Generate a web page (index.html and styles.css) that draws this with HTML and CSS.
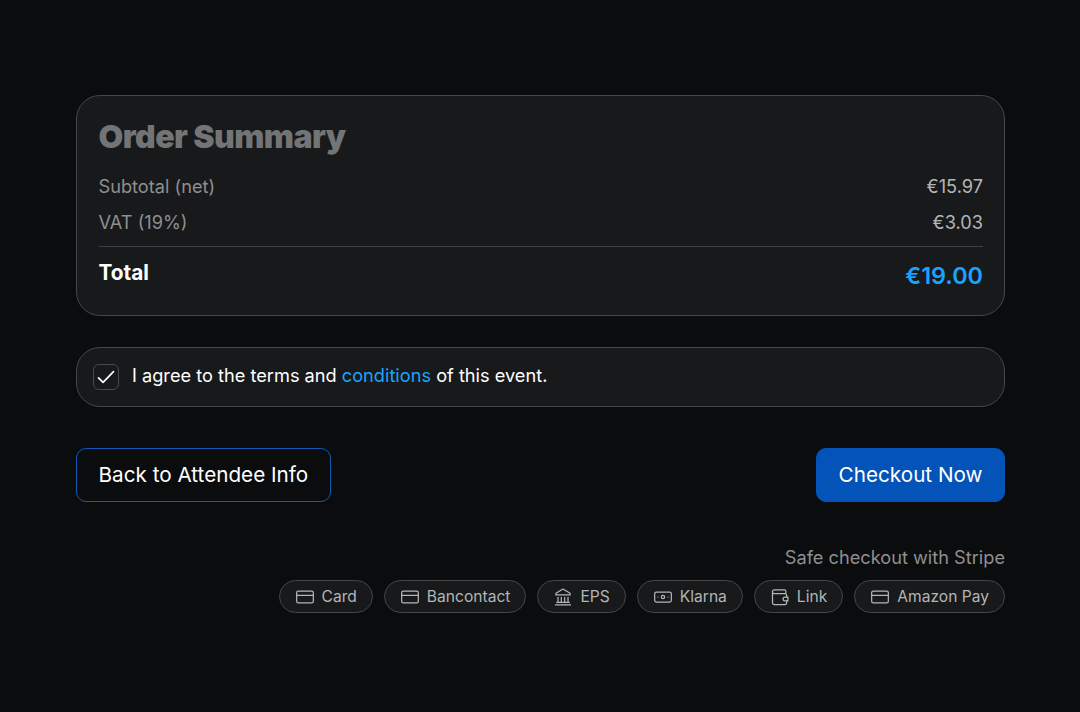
FILE: index.html
```html
<!DOCTYPE html>
<html lang="en">
<head>
    <meta charset="UTF-8">
    <meta name="viewport" content="width=device-width, initial-scale=1.0">
    <title>Order Summary</title>
    <link rel="stylesheet" href="styles.css">
</head>
<body>

<main class="checkout">
    <!-- Summary card -->
    <section class="summary">
        <h2 class="summary-title">Order Summary</h2>
        <div class="summary-row">
            <span class="summary-label">Subtotal (net)</span>
            <span class="summary-value">€15.97</span>
        </div>
        <div class="summary-row">
            <span class="summary-label">VAT (19%)</span>
            <span class="summary-value">€3.03</span>
        </div>
        <div class="summary-total">
            <span class="total-label">Total</span>
            <span class="total-value">€19.00</span>
        </div>
    </section>

    <!-- Terms -->
    <label class="terms">
        <span class="checkbox">
            <svg width="20" height="20" viewBox="0 0 24 24" fill="none" stroke="#fff" stroke-width="2" stroke-linecap="round" stroke-linejoin="round"><path d="M3 13l5.500 5.500L21 5.500"/></svg>
        </span>
        <span class="terms-text">I agree to the terms and <a class="terms-link" href="#">conditions</a> of this event.</span>
    </label>

    <div class="actions">
        <button class="btn btn-outline" type="button">Back to Attendee Info</button>
        <button class="btn btn-primary" type="button">Checkout Now</button>
    </div>

    <div class="payment">
        <p class="payment-note">Safe checkout with Stripe</p>
        <div class="payment-methods">
            <span class="chip">
                <svg class="chip-icon" viewBox="0 0 24 24"><rect x="2" y="5" width="20" height="14" rx="2"/><path d="M2 10h20"/></svg>
                Card
            </span>
            <span class="chip">
                <svg class="chip-icon" viewBox="0 0 24 24"><rect x="2" y="5" width="20" height="14" rx="2"/><path d="M2 10h20"/></svg>
                Bancontact
            </span>
            <span class="chip">
                <svg class="chip-icon" viewBox="0 0 24 24"><path d="M3 21.500h18M12 2.500l8.500 5v2h-17v-2zM6 12.500V18M10 12.500V18M14 12.500V18M18 12.500V18M4.500 18.500h15"/></svg>
                EPS
            </span>
            <span class="chip">
                <svg class="chip-icon" viewBox="0 0 24 24"><rect x="2" y="6" width="20" height="12" rx="2"/><circle cx="12" cy="12" r="2"/><path d="M6 12h.01M18 12h.01"/></svg>
                Klarna
            </span>
            <span class="chip">
                <svg class="chip-icon" viewBox="0 0 24 24"><path d="M19 7V5a1.500 1.500 0 0 0-1.500-1.500H5A2 2 0 0 0 3 5.500V19a2 2 0 0 0 2 2h13a2 2 0 0 0 2-2v-2.500M3 6a2 2 0 0 0 2 2h13a2 2 0 0 1 2 2v2"/><path d="M21.500 12H18a2 2 0 0 0 0 4.500h3.500z"/></svg>
                Link
            </span>
            <span class="chip">
                <svg class="chip-icon" viewBox="0 0 24 24"><rect x="2" y="5" width="20" height="14" rx="2"/><path d="M2 10h20"/></svg>
                Amazon Pay
            </span>
        </div>
    </div>
</main>

</body>
</html>
```

FILE: styles.css
```css
* {
    box-sizing: border-box;
}
body {
    margin: 0;
    min-height: 712px;
    background-color: #0b0c0e;
    color: #fff;
    font-family: Inter, 'Noto Sans', sans-serif;
}
.checkout {
    width: 929px;
    margin-left: 76px;
    padding-top: 95px;
}
.summary {
    height: 221px;
    padding: 22px 21px 22px 21.5px;
    background-color: #18191b;
    border: 1px solid #454648;
    border-radius: 24px;
}
.summary-title {
    margin: 0 0 18px;
    font-size: 32px;
    line-height: 38px;
    font-weight: 900;
    letter-spacing: -0.55px;
    color: #737475;
}
.summary-row {
    display: flex;
    justify-content: space-between;
    height: 24px;
    margin-bottom: 12px;
    font-size: 18.2px;
    line-height: 24px;
}
.summary-label {
    color: #8e8f91;
}
.summary-value {
    color: #b4b5b6;
}
.summary-total {
    display: flex;
    justify-content: space-between;
    padding-top: 12px;
    border-top: 1px solid #404143;
}
.total-label {
    font-size: 20.8px;
    line-height: 28px;
    font-weight: 700;
}
.total-value {
    margin-top: 2px;
    font-size: 23.4px;
    line-height: 30px;
    font-weight: 600;
    color: #19a3ff;
}
.terms {
    display: flex;
    align-items: center;
    gap: 13px;
    height: 60px;
    margin-top: 31px;
    padding: 0 16px;
    background-color: #18191b;
    border: 1px solid #454648;
    border-radius: 24px;
    font-size: 18.2px;
}
.terms-text {
    padding-bottom: 5px;
}
.checkbox {
    display: flex;
    align-items: center;
    justify-content: center;
    width: 26px;
    height: 26px;
    background-color: #18191b;
    border: 1px solid #48494b;
    border-radius: 6px;
}
.terms-link {
    color: #19a3ff;
    text-decoration: none;
}
.actions {
    display: flex;
    justify-content: space-between;
    margin-top: 41px;
}
.btn {
    height: 54px;
    padding: 0 21.5px 1px;
    font-family: inherit;
    font-size: 20.7px;
    color: #fff;
    border-radius: 10px;
}
.btn-outline {
    background-color: transparent;
    border: 1px solid #1259b5;
}
.btn-primary {
    background-color: #0353b8;
    border: 1px solid #0353b8;
}
.payment {
    margin-top: 43px;
    text-align: right;
}
.payment-note {
    margin: 0 0 11px;
    font-size: 18.2px;
    line-height: 24px;
    color: #8e8f91;
}
.payment-methods {
    display: flex;
    justify-content: flex-end;
    gap: 11px;
}
.chip {
    display: flex;
    align-items: center;
    gap: 7px;
    height: 33px;
    padding: 0 15px;
    background-color: #18191b;
    border: 1px solid #454648;
    border-radius: 17px;
    font-size: 15.6px;
    color: #b4b5b6;
}
.chip-icon {
    width: 20px;
    height: 20px;
    fill: none;
    stroke: #b4b5b6;
    stroke-width: 1.5;
    stroke-linecap: round;
    stroke-linejoin: round;
}
```
